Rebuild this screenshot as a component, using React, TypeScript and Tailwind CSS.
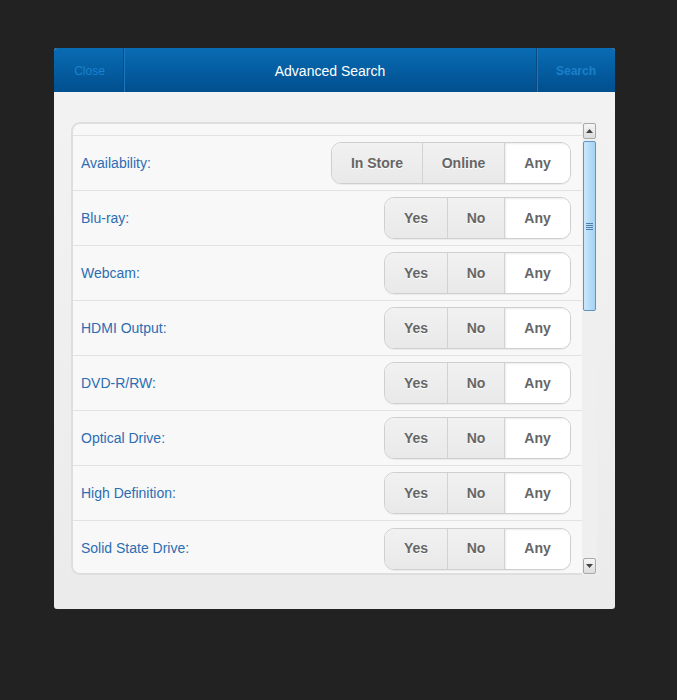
import React from 'react';

const rows = [
    { label: 'Availability:', options: [['In Store', 'w-[90px]'], ['Online', 'w-[82px]'], ['Any', 'w-[66px]']] },
    { label: 'Blu-ray:' },
    { label: 'Webcam:' },
    { label: 'HDMI Output:' },
    { label: 'DVD-R/RW:' },
    { label: 'Optical Drive:' },
    { label: 'High Definition:' },
    { label: 'Solid State Drive:' },
];

const yesNoAny = [['Yes', 'w-[62px]'], ['No', 'w-[57px]'], ['Any', 'w-[66px]']];

function Segmented({ options }: { options: string[][] }) {
    return (
        <div className="flex h-[42px] rounded-[10px] border border-[#cfcfcf] overflow-hidden shadow-[0_1px_1px_rgba(0,0,0,0.06)]">
            {options.map(([text, w], i) => {
                const selected = i === options.length - 1;
                return (
                    <div
                        key={text}
                        className={
                            'flex items-center justify-center text-[14px] font-bold text-[#666] [text-shadow:0_1px_0_#fff] ' +
                            w +
                            (i > 0 ? ' border-l border-[#d2d2d2]' : '') +
                            (selected ? ' bg-white shadow-[inset_1px_1px_2px_rgba(0,0,0,0.08)]' : ' bg-gradient-to-b from-[#f1f1f1] to-[#e9e9e9]')
                        }
                    >
                        {text}
                    </div>
                );
            })}
        </div>
    );
}

export default function App() {
    return (
        <div className="min-h-[700px] bg-[#222222] pt-[48px] pl-[54px] font-['Liberation_Sans',Arial,sans-serif]">
            <div className="w-[561px] h-[561px] rounded-[3px] overflow-hidden flex flex-col bg-gradient-to-b from-[#f3f3f3] to-[#ebebeb]">
                <div className="h-[44px] flex bg-gradient-to-b from-[#0a6cb4] to-[#014f8e]">
                    <div className="w-[70px] flex items-center justify-center pt-[2px] pl-[2px] text-[12px] text-[#1b82cf] border-r border-[#0b4a80] shadow-[1px_0_0_#1f78bd]">
                        Close
                    </div>
                    <div className="flex-1 flex items-center justify-center pt-[2px] text-[14px] text-white">
                        Advanced Search
                    </div>
                    <div className="w-[79px] flex items-center justify-center pt-[2px] text-[12px] font-bold text-[#1b80cb] border-l border-[#0b4a80] shadow-[inset_1px_0_0_#1f78bd]">
                        Search
                    </div>
                </div>
                <div className="flex-1 pt-[30px] pl-[17px] pr-[18px]">
                    <div className="flex h-[453px]">
                        <div className="flex-1 flex flex-col rounded-l-[9px] border-l-2 border-y-2 border-[#dedede] bg-[#f8f8f8] overflow-hidden">
                            <div className="h-[12px] border-b border-[#e2e2e2] shrink-0" />
                            {rows.map((row) => (
                                <div
                                    key={row.label}
                                    className="h-[55px] shrink-0 flex items-center justify-between pl-[8px] pr-[11px] border-b border-[#e2e2e2] last:border-b-0"
                                >
                                    <span className="text-[14px] text-[#2c6db3]">{row.label}</span>
                                    <Segmented options={row.options || yesNoAny} />
                                </div>
                            ))}
                        </div>
                        <div className="w-[15px] flex flex-col bg-[#efefef] pt-[1px] pb-[1px]">
                            <div className="h-[16px] mx-[1px] flex items-center justify-center border border-[#a9a9a9] rounded-[2px] bg-gradient-to-b from-[#f6f6f6] to-[#dcdcdc]">
                                <svg width="7" height="4" viewBox="0 0 7 4"><path d="M0 4 L3.5 0 L7 4 Z" fill="#444" /></svg>
                            </div>
                            <div className="h-[170px] mt-[2px] mx-[1px] rounded-[2px] border border-[#5d95c4] bg-gradient-to-r from-[#cbe7fb] via-[#b6ddf7] to-[#a6d3f2] flex items-center justify-center">
                                <div className="flex flex-col gap-[1px]">
                                    <div className="w-[7px] h-[1px] bg-[#4c7fab]" />
                                    <div className="w-[7px] h-[1px] bg-[#4c7fab]" />
                                    <div className="w-[7px] h-[1px] bg-[#4c7fab]" />
                                    <div className="w-[7px] h-[1px] bg-[#4c7fab]" />
                                </div>
                            </div>
                            <div className="flex-1" />
                            <div className="h-[16px] mx-[1px] flex items-center justify-center border border-[#a9a9a9] rounded-[2px] bg-gradient-to-b from-[#f6f6f6] to-[#dcdcdc]">
                                <svg width="7" height="4" viewBox="0 0 7 4"><path d="M0 0 L3.5 4 L7 0 Z" fill="#444" /></svg>
                            </div>
                        </div>
                    </div>
                </div>
            </div>
        </div>
    );
}
